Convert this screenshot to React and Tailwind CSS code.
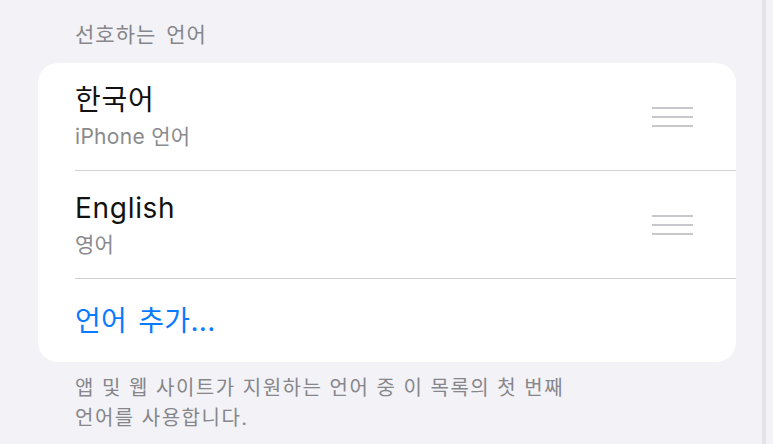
import React from 'react';

const font = { fontFamily: '"Inter", "Noto Sans CJK KR", sans-serif' };

const Handle = () => (
  <div className="flex w-[41px] flex-col gap-[7px]">
    <div className="h-[2px] bg-[#c8c8cc]"></div>
    <div className="h-[2px] bg-[#c8c8cc]"></div>
    <div className="h-[2px] bg-[#c8c8cc]"></div>
  </div>
);

const LangRow = ({ title, subtitle, height }) => (
  <div className={`flex items-center justify-between pl-[37px] pr-[43px] ${height}`}>
    <div className="flex flex-col">
      <div className="text-[28px] leading-[32px] tracking-[0.7px] text-[#111111]">{title}</div>
      <div className="mt-[9px] text-[21px] leading-[24px] tracking-[0.3px] text-[#8a8a8e]">{subtitle}</div>
    </div>
    <Handle />
  </div>
);

function App() {
  return (
    <div className="flex h-[444px] w-[773px] overflow-hidden bg-[#f2f2f7]" style={font}>
      <div className="w-[762px] px-[38px]">
        <div className="h-[63px] pl-[37px] pt-[22px] text-[21px] leading-[26px] tracking-[1px] text-[#86868b] [word-spacing:3px]">
          선호하는 언어
        </div>
        <div className="w-[698px] overflow-hidden rounded-[20px] bg-white">
          <LangRow title="한국어" subtitle="iPhone 언어" height="h-[107px]" />
          <div className="ml-[37px] h-px bg-[#d1d1d6]"></div>
          <LangRow title="English" subtitle="영어" height="h-[107px]" />
          <div className="ml-[37px] h-px bg-[#d1d1d6]"></div>
          <div className="flex h-[83px] items-center pl-[37px] text-[28px] leading-[32px] tracking-[0.3px] text-[#0a7aff] [word-spacing:3px]">
            언어 추가...
          </div>
        </div>
        <div className="pl-[37px] pt-[11px] text-[20px] leading-[30px] tracking-[1.5px] text-[#86868b]">
          앱 및 웹 사이트가 지원하는 언어 중 이 목록의 첫 번째
          <br />
          언어를 사용합니다.
        </div>
      </div>
      <div className="h-full w-[4px] bg-[#e3e3e8]"></div>
      <div className="h-full flex-1 bg-[#f2f2f7]"></div>
    </div>
  );
}

export default App;
